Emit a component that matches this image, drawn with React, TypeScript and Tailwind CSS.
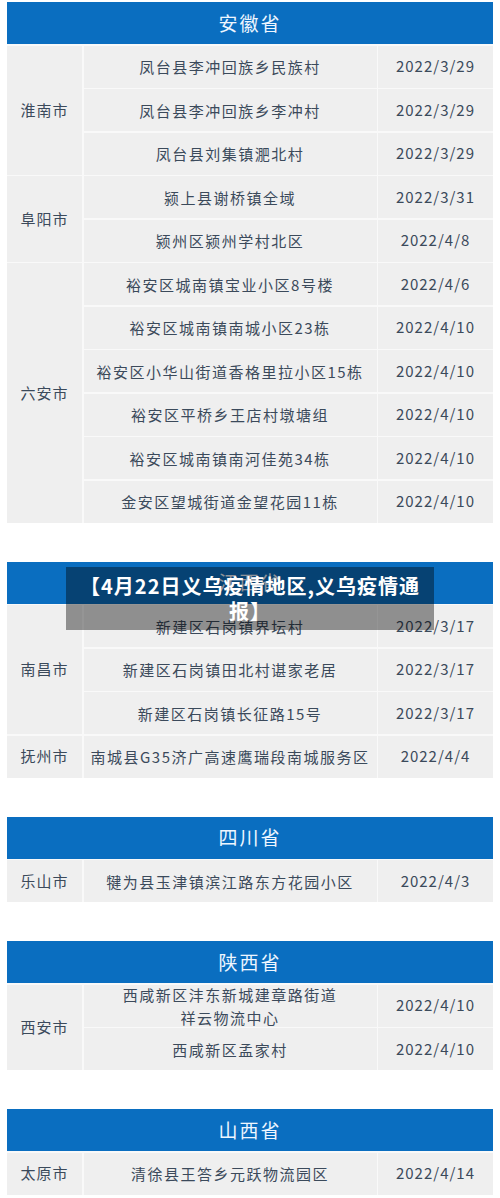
import { Fragment } from 'react'
import type { ReactNode } from 'react'

type Group = {
  city: string
  rows: { place: ReactNode; date: string }[]
}

type Province = {
  name: string
  groups: Group[]
}

const spanClass: Record<number, string> = {
  1: 'row-span-1',
  2: 'row-span-2',
  3: 'row-span-3',
  4: 'row-span-4',
  6: 'row-span-6',
}

const provinces: Province[] = [
  {
    name: '安徽省',
    groups: [
      {
        city: '淮南市',
        rows: [
          { place: '凤台县李冲回族乡民族村', date: '2022/3/29' },
          { place: '凤台县李冲回族乡李冲村', date: '2022/3/29' },
          { place: '凤台县刘集镇淝北村', date: '2022/3/29' },
        ],
      },
      {
        city: '阜阳市',
        rows: [
          { place: '颍上县谢桥镇全域', date: '2022/3/31' },
          { place: '颍州区颍州学村北区', date: '2022/4/8' },
        ],
      },
      {
        city: '六安市',
        rows: [
          { place: '裕安区城南镇宝业小区8号楼', date: '2022/4/6' },
          { place: '裕安区城南镇南城小区23栋', date: '2022/4/10' },
          { place: '裕安区小华山街道香格里拉小区15栋', date: '2022/4/10' },
          { place: '裕安区平桥乡王店村墩塘组', date: '2022/4/10' },
          { place: '裕安区城南镇南河佳苑34栋', date: '2022/4/10' },
          { place: '金安区望城街道金望花园11栋', date: '2022/4/10' },
        ],
      },
    ],
  },
  {
    name: '江西省',
    groups: [
      {
        city: '南昌市',
        rows: [
          { place: '新建区石岗镇界坛村', date: '2022/3/17' },
          { place: '新建区石岗镇田北村谌家老居', date: '2022/3/17' },
          { place: '新建区石岗镇长征路15号', date: '2022/3/17' },
        ],
      },
      {
        city: '抚州市',
        rows: [{ place: '南城县G35济广高速鹰瑞段南城服务区', date: '2022/4/4' }],
      },
    ],
  },
  {
    name: '四川省',
    groups: [
      {
        city: '乐山市',
        rows: [{ place: '犍为县玉津镇滨江路东方花园小区', date: '2022/4/3' }],
      },
    ],
  },
  {
    name: '陕西省',
    groups: [
      {
        city: '西安市',
        rows: [
          {
            place: (
              <>
                西咸新区沣东新城建章路街道
                <br />
                祥云物流中心
              </>
            ),
            date: '2022/4/10',
          },
          { place: '西咸新区孟家村', date: '2022/4/10' },
        ],
      },
    ],
  },
  {
    name: '山西省',
    groups: [
      {
        city: '太原市',
        rows: [{ place: '清徐县王答乡元跃物流园区', date: '2022/4/14' }],
      },
    ],
  },
]

function ProvinceTable({ province, children }: { province: Province; children?: ReactNode }) {
  return (
    <section className="relative">
      <div className="h-[42px] bg-[#0a6ec0] flex items-center justify-center text-[19px] tracking-[2px] text-[#eef6ff]">
        {province.name}
      </div>
      <div className="grid grid-cols-[75px_1fr_115px] auto-rows-[42px] gap-[1.5px] pt-[1.5px] bg-[#f9f9f9]">
        {province.groups.map((g) => (
          <Fragment key={g.city}>
            <div className={`${spanClass[g.rows.length]} bg-[#efefef] flex items-center justify-center`}>
              {g.city}
            </div>
            {g.rows.map((r, i) => (
              <Fragment key={i}>
                <div className="col-start-2 bg-[#efefef] flex items-center justify-center text-center leading-[23px] tracking-[1.5px]">
                  <span>{r.place}</span>
                </div>
                <div className="col-start-3 bg-[#efefef] flex items-center justify-center">{r.date}</div>
              </Fragment>
            ))}
          </Fragment>
        ))}
      </div>
      {children}
    </section>
  )
}

export default function App() {
  return (
    <div className="w-[500px] min-h-[1198px] bg-white px-[7px] pt-[2px] pb-[4px] flex flex-col gap-[39px] text-[15px] tracking-[1px] text-[#3b4a5b] font-['Noto_Sans_CJK_SC','Noto_Sans',sans-serif]">
      {provinces.map((p) => (
        <ProvinceTable key={p.name} province={p}>
          {p.name === '江西省' && (
            <div className="absolute left-1/2 top-[5px] -translate-x-1/2 w-[368px] h-[63px] bg-black/40 pt-[6px] text-center text-white font-bold text-[20px] leading-[25px] tracking-[1px]">
              <span className="whitespace-nowrap">【4月22日义乌疫情地区,义乌疫情通</span>
              <br />
              报】
            </div>
          )}
        </ProvinceTable>
      ))}
    </div>
  )
}
